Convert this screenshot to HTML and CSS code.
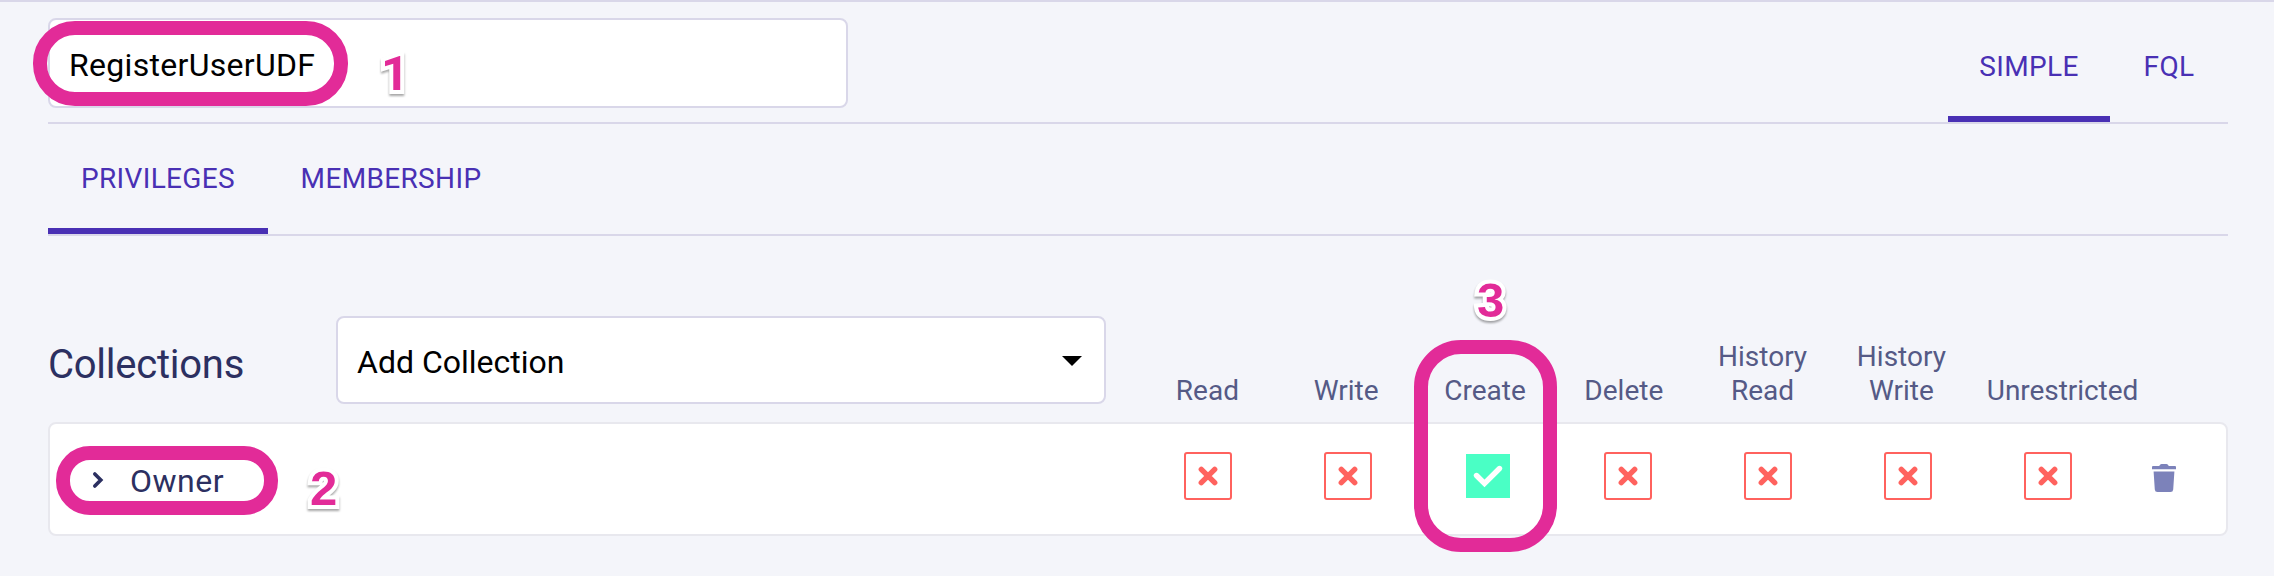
FILE: index.html
```html
<!DOCTYPE html>
<html lang="en">
<head>
<meta charset="utf-8">
<title>Role editor</title>
<link rel="stylesheet" href="styles.css">
</head>
<body>
<svg class="defs" aria-hidden="true">
  <symbol id="cross" viewBox="0 0 20 20"><path d="M3.3 3.3 16.7 16.7M16.7 3.3 3.3 16.7" fill="none" stroke="currentColor" stroke-width="5.4" stroke-linecap="round"/></symbol>
</svg>
<main class="page">
  <header class="topbar">
    <div class="name-input">RegisterUserUDF</div>
    <nav class="tabs">
      <a class="tab tab-simple active">SIMPLE</a>
      <a class="tab tab-fql">FQL</a>
    </nav>
  </header>
  <nav class="subtabs tabs">
    <a class="tab tab-privileges active">PRIVILEGES</a>
    <a class="tab tab-membership">MEMBERSHIP</a>
  </nav>
  <section class="collections">
    <div class="heading-row">
      <h2 class="title">Collections</h2>
      <div class="select"><span>Add Collection</span><svg width="20" height="10" viewBox="0 0 20 10"><path d="M0 0H20L10 10Z"/></svg></div>
      <div class="labels">
        <span class="label">Read</span>
        <span class="label">Write</span>
        <span class="label">Create</span>
        <span class="label">Delete</span>
        <span class="label">History<br>Read</span>
        <span class="label">History<br>Write</span>
        <span class="label label-wide">Unrestricted</span>
      </div>
    </div>
    <div class="card">
      <div class="owner">
        <svg class="chevron" width="12" height="18" viewBox="0 0 12 18"><path d="M2.8 3 8.8 9 2.8 15" fill="none" stroke="currentColor" stroke-width="3.6" stroke-linecap="round"/></svg>
        <span>Owner</span>
      </div>
      <div class="cell"><span class="box"><svg class="x"><use href="#cross"/></svg></span></div>
      <div class="cell"><span class="box"><svg class="x"><use href="#cross"/></svg></span></div>
      <div class="cell"><span class="box-on"><svg width="44" height="44" viewBox="0 0 44 44"><path d="M10.5 21.5 18.5 29.5 33.5 14.5" fill="none" stroke="#fff" stroke-width="5.4" stroke-linecap="round"/></svg></span></div>
      <div class="cell"><span class="box"><svg class="x"><use href="#cross"/></svg></span></div>
      <div class="cell"><span class="box"><svg class="x"><use href="#cross"/></svg></span></div>
      <div class="cell"><span class="box"><svg class="x"><use href="#cross"/></svg></span></div>
      <div class="cell"><span class="box"><svg class="x"><use href="#cross"/></svg></span></div>
      <div class="trash"><svg width="24" height="28" viewBox="0 0 24 28"><path d="M1 2H7.2Q8.2 0 9.5 0H14.5Q15.8 0 16.8 2H23Q24 2 24 3V5.3H0V3Q0 2 1 2ZM1.6 7.6H22.4L21.2 25.5Q21 28 18.5 28H5.5Q3 28 2.8 25.5Z" fill="currentColor"/></svg></div>
    </div>
  </section>
</main>
<div class="ring ring-name"></div>
<div class="ring ring-owner"></div>
<div class="ring ring-create"></div>
<span class="num num-1">1</span>
<span class="num num-2">2</span>
<span class="num num-3">3</span>
</body>
</html>
```
FILE: styles.css
```css
* { box-sizing: border-box; }
body {
  margin: 0;
  height: 576px;
  overflow: hidden;
  position: relative;
  background: #f4f5fa;
  border-top: 2px solid #d9d7e9;
  font-family: Roboto, "Liberation Sans", sans-serif;
}
.defs { display: none; }
svg { display: block; }
.page { padding: 0 46px 0 48px; }

.topbar {
  display: flex;
  justify-content: space-between;
  height: 122px;
  border-bottom: 2px solid #d9d7e9;
}
.name-input {
  width: 800px;
  height: 90px;
  margin-top: 16px;
  padding-left: 19px;
  border: 2px solid #d9d7e9;
  border-radius: 8px;
  background: #fff;
  color: #000;
  font-size: 32px;
  line-height: 90px;
  letter-spacing: 0.3px;
}
.tabs { display: flex; }
.tab {
  font-size: 28px;
  letter-spacing: 0.35px;
  color: #4930b4;
  text-align: center;
  white-space: nowrap;
}
.tab.active { border-bottom: 6px solid #4930b4; }
.topbar .tab { line-height: 130px; height: 120px; }
.tab-simple { width: 162px; }
.tab-fql { width: 118px; }
.subtabs {
  height: 112px;
  border-bottom: 2px solid #d9d7e9;
}
.subtabs .tab { height: 110px; line-height: 110px; }
.tab-privileges { width: 220px; }
.tab-membership { width: 246px; }

.heading-row {
  display: flex;
  height: 186px;
  padding-top: 80px;
}
.title {
  width: 288px;
  margin: 0;
  font-size: 40px;
  font-weight: 400;
  line-height: 98px;
  letter-spacing: -0.25px;
  color: #2c3061;
}
.select {
  display: flex;
  align-items: center;
  justify-content: space-between;
  width: 770px;
  height: 88px;
  padding: 4px 22px 0 19px;
  border: 2px solid #d9d7e9;
  border-radius: 8px;
  background: #fff;
  color: #000;
  font-size: 32px;
}
.select svg { margin-top: -3px; }
.labels {
  display: flex;
  align-items: flex-end;
  height: 92px;
  margin-left: 32px;
}
.label {
  width: 138.8px;
  font-size: 28px;
  line-height: 34px;
  color: #555a86;
  text-align: center;
}
.label-wide { padding-left: 16px; letter-spacing: -0.05px; }

.card {
  display: flex;
  align-items: center;
  height: 114px;
  padding-bottom: 6px;
  border: 2px solid #e8e8ee;
  border-radius: 8px;
  background: #fff;
}
.owner {
  display: flex;
  align-items: center;
  gap: 26px;
  width: 1088px;
  padding: 8px 0 0 42px;
  font-size: 32px;
  letter-spacing: 0.5px;
  color: #2c3061;
}
.owner span { padding-top: 2px; }
.cell {
  display: flex;
  justify-content: center;
  width: 140px;
}
.box {
  display: flex;
  align-items: center;
  justify-content: center;
  width: 48px;
  height: 48px;
  border: 2px solid #ff625e;
  border-radius: 3px;
  color: #ff625e;
}
.x { width: 20px; height: 20px; }
.box-on { background: #4affc5; }
.trash {
  display: flex;
  justify-content: center;
  width: 92px;
  padding-top: 4px;
  color: #7c82ba;
}

/* Numbered annotations drawn over the form */
.ring {
  position: absolute;
  border: 14px solid #e22b98;
}
.ring-name { left: 33px; top: 19px; width: 315px; height: 85px; border-radius: 42px; }
.ring-owner { left: 56px; top: 444px; width: 222px; height: 69px; border-radius: 34px; }
.ring-create { left: 1414px; top: 338px; width: 143px; height: 212px; border-radius: 47px; }
.num {
  position: absolute;
  font: 700 49px/56px "Liberation Sans", sans-serif;
  color: #e22b98;
  -webkit-text-stroke: 8px #fff;
  paint-order: stroke fill;
  stroke-linejoin: round;
  filter: drop-shadow(0 2px 1px rgba(0, 0, 0, 0.35));
}
.num-1 { left: 381px; top: 44px; font-family: Roboto, sans-serif; }
.num-2 { left: 310px; top: 458px; }
.num-3 { left: 1477px; top: 270px; }
```
